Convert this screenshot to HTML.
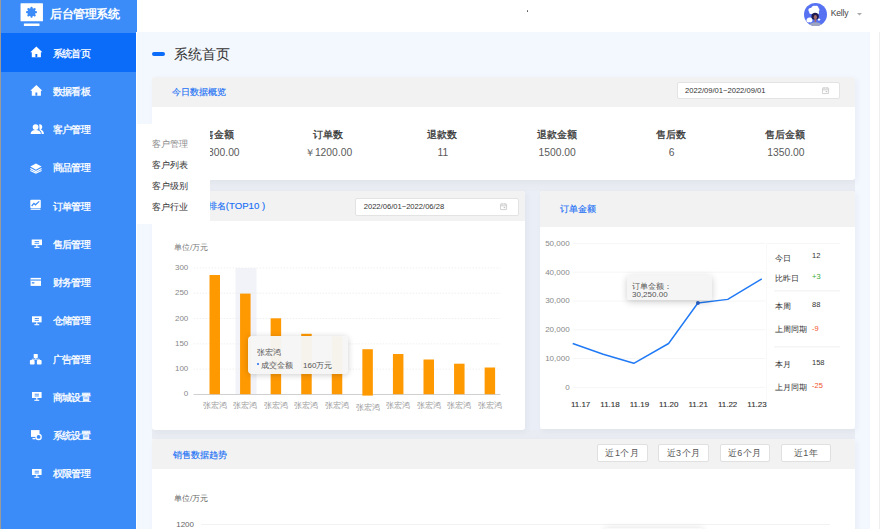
<!DOCTYPE html><html><head><meta charset="utf-8"><style>
*{margin:0;padding:0;box-sizing:border-box}
html,body{width:880px;height:529px;overflow:hidden;background:#fff;font-family:"Liberation Sans",sans-serif;color:#333}
.abs{position:absolute;white-space:nowrap}
#side{position:absolute;left:0;top:0;width:136px;height:529px;background:#3b8cf9;border-left:1px solid #9a9a9a}
#main{position:absolute;left:136px;top:32px;width:734px;height:497px;background:#f3f7fe;border-left:1px solid #fff}
#hdr{position:absolute;left:136px;top:0;width:744px;height:32px;background:#fff}
#gutter{position:absolute;left:870px;top:32px;width:10px;height:497px;background:#fff;border-right:1px solid #eeeeee}
.card{position:absolute;background:#fff;border-radius:3px;overflow:hidden;box-shadow:2px 2px 6px rgba(40,60,100,0.05)}
.ch{position:absolute;left:0;right:0;top:0;background:#f2f2f2}
.ct{position:absolute;font-size:9px;color:#1a70f5;-webkit-text-stroke:0.15px #1a70f5;white-space:nowrap;line-height:10px}
.date{position:absolute;background:#fff;border:1px solid #e3e3e3;border-radius:2px}
.date span{position:absolute;font-size:7.6px;color:#333;line-height:9px;white-space:nowrap}
.st{position:absolute;width:120px;text-align:center;white-space:nowrap;line-height:12px}
.st.b{font-size:10px;color:#333;-webkit-text-stroke:0.28px #333}
.st.v{font-size:10.3px;color:#5a5a5a}
.it{position:absolute;left:52.5px;font-size:10px;letter-spacing:-0.6px;-webkit-text-stroke:0.3px #fff;color:#fff;line-height:12px;white-space:nowrap}
.pm{position:absolute;left:152px;font-size:9px;color:#333;line-height:10px;white-space:nowrap}
.yl{position:absolute;font-size:8px;color:#888;line-height:9px;text-align:right;width:30px;white-space:nowrap}
.xl{position:absolute;font-size:8px;color:#999;line-height:9px;text-align:center;width:30px;white-space:nowrap}
.xl2{position:absolute;font-size:8px;color:#333;line-height:9px;text-align:center;width:30px;white-space:nowrap;-webkit-text-stroke:0.12px #333}
.sl{position:absolute;left:775px;font-size:8px;color:#333;line-height:9px;white-space:nowrap}
.sv{position:absolute;left:812px;font-size:7.5px;color:#333;line-height:9px;white-space:nowrap}
.btn{position:absolute;top:444.2px;width:50.5px;height:18.3px;background:#fff;border:1px solid #e0e0e0;border-radius:2px;font-size:9px;letter-spacing:0.5px;color:#555;text-align:center;line-height:16px}
</style></head><body>
<div id="hdr"></div><div id="main"></div><div id="gutter"></div>
<div class="abs" style="left:152px;top:179px;width:703px;height:12.5px;background:#e9ecf2"></div>
<div class="abs" style="left:152px;top:429px;width:703px;height:10px;background:#e9ecf2"></div>
<div class="abs" style="left:525px;top:191px;width:15px;height:239px;background:#eaeef6"></div>
<div id="side"></div>
<div class="abs" style="left:136px;top:0;width:1px;height:32px;background:#3b8cf9"></div>
<div class="abs" style="left:1px;top:33.3px;width:135px;height:38.3px;background:#0b6cfa"></div>
<svg class="abs" style="left:19px;top:3px" width="25" height="24" viewBox="0 0 25 24">
<rect x="1.55" y="0.2" width="22.4" height="18.1" rx="0.6" fill="#fff"/>
<rect x="4.9" y="20.5" width="15.6" height="2.5" fill="#fff"/>
<g fill="#3b8cf9" transform="translate(12.5 9.2)"><circle r="3.9"/>
<rect x="-1.1" y="-5.5" width="2.2" height="11" rx="1"/><rect x="-1.1" y="-5.5" width="2.2" height="11" rx="1" transform="rotate(45)"/>
<rect x="-1.1" y="-5.5" width="2.2" height="11" rx="1" transform="rotate(90)"/><rect x="-1.1" y="-5.5" width="2.2" height="11" rx="1" transform="rotate(135)"/></g></svg>
<div class="abs" style="left:50px;top:6.7px;letter-spacing:-0.4px;font-size:12px;font-weight:bold;color:#fff;line-height:14px">后台管理系统</div>
<div class="it" style="top:47.50px">系统首页</div>
<div class="it" style="top:85.77px">数据看板</div>
<div class="it" style="top:124.04px">客户管理</div>
<div class="it" style="top:162.31px">商品管理</div>
<div class="it" style="top:200.58px">订单管理</div>
<div class="it" style="top:238.85px">售后管理</div>
<div class="it" style="top:277.12px">财务管理</div>
<div class="it" style="top:315.39px">仓储管理</div>
<div class="it" style="top:353.66px">广告管理</div>
<div class="it" style="top:391.93px">商城设置</div>
<div class="it" style="top:430.20px">系统设置</div>
<div class="it" style="top:468.47px">权限管理</div>
<svg class="abs" style="left:0;top:0" width="136" height="529"><path d="M30.3 52.2 L36.35 46.6 L42.4 52.2 L40.9 52.2 L40.9 57.2 L31.8 57.2 L31.8 52.2 Z" fill="#fff"/><rect x="35.4" y="54.0" width="1.9" height="3.2" fill="#0b6cfa"/><path d="M30.3 90.69999999999999 L36.35 85.1 L42.4 90.69999999999999 L40.9 90.69999999999999 L40.9 95.69999999999999 L31.8 95.69999999999999 L31.8 90.69999999999999 Z" fill="#fff"/><rect x="35.4" y="92.5" width="1.9" height="3.2" fill="#3b8cf9"/><path d="M39.2 124.4 C41.2 124 42.6 125.6 42.2 127.4 C42 128.6 41.2 129.4 40.4 129.6 C42.6 130 43.9 131.5 43.9 133.9 L41.8 133.9 C41.5 131.8 40.8 130.8 39.6 130.2 Z" fill="#fff"/><circle cx="35.6" cy="127.1" r="2.9" fill="#fff"/><path d="M30.6 133.9 C30.7 131 32.5 129.9 35.6 129.9 C38.7 129.9 40.8 131 41 133.9 Z" fill="#fff"/><path d="M30.3 166.6 L35.9 163.5 L41.6 166.6 L35.9 169.7 Z" fill="#fff"/><path d="M30.3 168.6 L35.9 171.6 L41.6 168.6" fill="none" stroke="#fff" stroke-width="1.1"/><path d="M30.3 170.4 L35.9 173.1 L41.6 170.4" fill="none" stroke="#fff" stroke-width="1.1"/><rect x="30.3" y="199.8" width="10.5" height="8.4" rx="1" fill="#fff"/><rect x="30.6" y="208.8" width="9.9" height="1" fill="#fff"/><path d="M31.7 206 L33.9 203.3 L35.5 204.8 L39.2 201.4" fill="none" stroke="#3b8cf9" stroke-width="1.25"/><rect x="31.7" y="239.5" width="10.3" height="5.64" fill="#fff"/><rect x="34.58" y="241.16" width="4.53" height="0.9" fill="#3b8cf9"/><rect x="34.58" y="242.82" width="4.53" height="0.9" fill="#3b8cf9"/><rect x="36.25" y="245.14" width="1.2" height="1.83" fill="#fff"/><rect x="34.27" y="246.80" width="5.15" height="1.1" fill="#fff"/><rect x="30.6" y="277.9" width="10.4" height="8" fill="#fff"/><rect x="30.6" y="279.5" width="10.4" height="1.1" fill="#3b8cf9"/><rect x="31.8" y="282.2" width="2.6" height="1.3" fill="#3b8cf9"/><rect x="32" y="316.3" width="9.6" height="6.05" fill="#fff"/><rect x="34.69" y="318.08" width="4.22" height="0.9" fill="#3b8cf9"/><rect x="34.69" y="319.86" width="4.22" height="0.9" fill="#3b8cf9"/><rect x="36.20" y="322.35" width="1.2" height="1.96" fill="#fff"/><rect x="34.40" y="324.13" width="4.80" height="1.1" fill="#fff"/><rect x="33.7" y="353.9" width="4.1" height="4" rx="0.7" fill="#fff"/><rect x="29.9" y="359.9" width="4.7" height="4.6" rx="0.8" fill="#fff"/><rect x="36.9" y="359.9" width="4.7" height="4.6" rx="0.8" fill="#fff"/><path d="M35.75 357.5 L35.75 359.2 M32.2 360 L32.2 359.2 L39.3 359.2 L39.3 360" fill="none" stroke="#fff" stroke-width="0.8"/><rect x="32" y="392" width="9.6" height="5.98" fill="#fff"/><rect x="34.69" y="393.76" width="4.22" height="0.9" fill="#3b8cf9"/><rect x="34.69" y="395.52" width="4.22" height="0.9" fill="#3b8cf9"/><rect x="36.20" y="397.98" width="1.2" height="1.94" fill="#fff"/><rect x="34.40" y="399.74" width="4.80" height="1.1" fill="#fff"/><rect x="31" y="430.1" width="8.5" height="6.8" fill="#fff"/><rect x="32.5" y="438" width="3" height="1.3" fill="#fff"/><circle cx="38.6" cy="436.9" r="2.6" fill="#3b8cf9" stroke="#fff" stroke-width="1.3"/><rect x="32" y="469" width="9.6" height="5.98" fill="#fff"/><rect x="34.69" y="470.76" width="4.22" height="0.9" fill="#3b8cf9"/><rect x="34.69" y="472.52" width="4.22" height="0.9" fill="#3b8cf9"/><rect x="36.20" y="474.98" width="1.2" height="1.94" fill="#fff"/><rect x="34.40" y="476.74" width="4.80" height="1.1" fill="#fff"/></svg>
<svg class="abs" style="left:803.5px;top:3.1px" width="23" height="23" viewBox="0 0 22.6 22.6">
<defs><clipPath id="cc"><circle cx="11.3" cy="11.3" r="11.3"/></clipPath></defs>
<circle cx="11.3" cy="11.3" r="11.3" fill="#5672f3"/>
<g clip-path="url(#cc)">
<path d="M4.4 7.5 C4 5.5 5.5 4.5 7 5 C7.5 3 9.5 2 11 3 C12.5 2 14.5 3 14.2 5 C15.5 5.8 15.5 7.5 14.5 8.3 C15.3 9.5 14.5 11.3 12.8 11.2 C11.5 12 9.5 11.8 8.5 10.8 C6.5 11.3 4.5 10 5.2 8.5 C4.6 8.2 4.4 7.8 4.4 7.5 Z" fill="#fff"/>
<path d="M2.4 17.5 C2.2 15.5 3.8 14 5.8 14.2 C7.5 14 8.6 15.5 8.3 17 C8.5 18.5 7 19.3 5.5 19 C4 19.5 2.5 18.8 2.4 17.5 Z" fill="#fff"/>
<path d="M13.4 16.2 C13.8 15 15.5 14.8 16 16 C16.3 17 15 17.6 14 17.2 Z" fill="#fff"/>
<path d="M7.3 13 C7.2 10.8 8.8 9.6 10.9 9.6 C13.2 9.6 14.6 11 14.6 13 C14.6 15 13.6 16.2 12.5 16.2 L9.3 16.2 C8 16.2 7.3 14.8 7.3 13 Z" fill="#1f1b4d"/>
<ellipse cx="11.2" cy="13.9" rx="1.6" ry="2.1" fill="#a36a6a"/>
<rect x="10.4" y="15.8" width="1.6" height="3" fill="#a36a6a"/>
<path d="M4.5 23 C5 20 8 18.8 11.3 18.8 C14.5 18.8 17.5 20 18 23 Z" fill="#9ea6bf"/>
</g></svg>
<div class="abs" style="left:830.8px;top:8px;font-size:8.6px;letter-spacing:-0.25px;color:#444;line-height:10px">Kelly</div>
<svg class="abs" style="left:857px;top:13px" width="6" height="3"><path d="M0 0 L5 0 L2.5 2.5 Z" fill="#aaa"/></svg>
<div class="abs" style="left:526.5px;top:10px;width:1.6px;height:1.6px;border-radius:1px;background:#555"></div>
<div class="abs" style="left:152px;top:52px;width:13.3px;height:4px;border-radius:2px;background:#0b6cfa"></div>
<div class="abs" style="left:173.5px;top:45.7px;font-size:14px;letter-spacing:0.3px;color:#333;line-height:17px">系统首页</div>
<div class="card" style="left:152px;top:77px;width:703px;height:102.5px"><div class="ch" style="height:29.5px"></div></div>
<div class="ct" style="left:171.7px;top:87px">今日数据概览</div>
<div class="date" style="left:676.5px;top:81.5px;width:163.7px;height:17.5px"><span style="left:7.5px;top:3.6px">2022/09/01~2022/09/01</span></div>
<svg class="abs" style="left:821.8px;top:87.2px" width="8" height="8" viewBox="0 0 8 8"><rect x="0.4" y="1" width="6.2" height="5.6" rx="0.5" fill="none" stroke="#c4c4c4" stroke-width="0.8"/><path d="M0.4 2.8 H6.6 M2 0.2 V1.6 M5 0.2 V1.6" stroke="#c4c4c4" stroke-width="0.8"/><rect x="3.7" y="4" width="1.5" height="1.2" fill="#c4c4c4"/></svg>
<div class="st b" style="left:153.70px;top:129px">销售金额</div>
<div class="st v" style="left:119.6px;top:147.3px;text-align:right">￥1300.00</div>
<div class="st b" style="left:268.03px;top:129px">订单数</div>
<div class="st v" style="left:268.53px;top:147.3px">￥1200.00</div>
<div class="st b" style="left:382.36px;top:129px">退款数</div>
<div class="st v" style="left:382.86px;top:147.3px">11</div>
<div class="st b" style="left:496.69px;top:129px">退款金额</div>
<div class="st v" style="left:497.19px;top:147.3px">1500.00</div>
<div class="st b" style="left:611.02px;top:129px">售后数</div>
<div class="st v" style="left:611.52px;top:147.3px">6</div>
<div class="st b" style="left:725.35px;top:129px">售后金额</div>
<div class="st v" style="left:725.85px;top:147.3px">1350.00</div>
<div class="card" style="left:152px;top:191px;width:373px;height:238.5px"><div class="ch" style="height:29.5px"></div></div>
<div class="ct" style="left:171.8px;top:201.2px">商品销售排名<span style="font-size:9.6px">(TOP10 )</span></div>
<div class="date" style="left:355.3px;top:198px;width:163.5px;height:17.5px"><span style="left:7.4px;top:3.3px">2022/06/01~2022/06/28</span></div>
<svg class="abs" style="left:500px;top:202.8px" width="8" height="8" viewBox="0 0 8 8"><rect x="0.4" y="1" width="6.2" height="5.6" rx="0.5" fill="none" stroke="#c4c4c4" stroke-width="0.8"/><path d="M0.4 2.8 H6.6 M2 0.2 V1.6 M5 0.2 V1.6" stroke="#c4c4c4" stroke-width="0.8"/><rect x="3.7" y="4" width="1.5" height="1.2" fill="#c4c4c4"/></svg>
<div class="abs" style="left:174px;top:243.3px;font-size:8px;color:#777;line-height:9px">单位/万元</div>
<svg class="abs" style="left:0;top:0" width="880" height="529"><rect x="235.5" y="268" width="21" height="126.2" fill="#f1f3f8"/><line x1="193.6" y1="267.9" x2="500.4" y2="267.9" stroke="#ececec" stroke-width="0.8" stroke-dasharray="1.5 1.5"/><line x1="193.6" y1="293.2" x2="500.4" y2="293.2" stroke="#ececec" stroke-width="0.8" stroke-dasharray="1.5 1.5"/><line x1="193.6" y1="318.5" x2="500.4" y2="318.5" stroke="#ececec" stroke-width="0.8" stroke-dasharray="1.5 1.5"/><line x1="193.6" y1="343.8" x2="500.4" y2="343.8" stroke="#ececec" stroke-width="0.8" stroke-dasharray="1.5 1.5"/><line x1="193.6" y1="369.1" x2="500.4" y2="369.1" stroke="#ececec" stroke-width="0.8" stroke-dasharray="1.5 1.5"/><line x1="193.6" y1="394.5" x2="500.4" y2="394.5" stroke="#d0d0d0" stroke-width="1"/><rect x="209.50" y="275" width="10.5" height="119.20" fill="#ff9902"/><rect x="240.07" y="293.6" width="10.5" height="100.60" fill="#ff9902"/><rect x="270.64" y="318.3" width="10.5" height="75.90" fill="#ff9902"/><rect x="301.21" y="333.8" width="10.5" height="60.40" fill="#ff9902"/><rect x="331.78" y="336.5" width="10.5" height="57.70" fill="#ff9902"/><rect x="362.35" y="349.2" width="10.5" height="46.40" fill="#ff9902"/><rect x="392.92" y="354" width="10.5" height="40.20" fill="#ff9902"/><rect x="423.49" y="359.5" width="10.5" height="34.70" fill="#ff9902"/><rect x="454.06" y="363.7" width="10.5" height="30.50" fill="#ff9902"/><rect x="484.63" y="367.5" width="10.5" height="26.70" fill="#ff9902"/></svg>
<div class="yl" style="left:158.3px;top:262.90px">300</div>
<div class="yl" style="left:158.3px;top:288.20px">250</div>
<div class="yl" style="left:158.3px;top:313.50px">200</div>
<div class="yl" style="left:158.3px;top:338.80px">150</div>
<div class="yl" style="left:158.3px;top:364.10px">100</div>
<div class="yl" style="left:158.3px;top:389.20px">0</div>
<div class="xl" style="left:199.70px;top:401px">张宏鸿</div>
<div class="xl" style="left:230.27px;top:401px">张宏鸿</div>
<div class="xl" style="left:260.84px;top:401px">张宏鸿</div>
<div class="xl" style="left:291.41px;top:401px">张宏鸿</div>
<div class="xl" style="left:321.98px;top:401px">张宏鸿</div>
<div class="xl" style="left:352.55px;top:402.5px">张宏鸿</div>
<div class="xl" style="left:383.12px;top:401px">张宏鸿</div>
<div class="xl" style="left:413.69px;top:401px">张宏鸿</div>
<div class="xl" style="left:444.26px;top:401px">张宏鸿</div>
<div class="xl" style="left:474.83px;top:401px">张宏鸿</div>
<div class="abs" style="left:248.3px;top:336.3px;width:99.7px;height:38.1px;background:rgba(246,246,246,0.96);border-radius:4px;box-shadow:0 1px 6px rgba(0,0,0,0.2)"></div>
<div class="abs" style="left:256.5px;top:348px;font-size:8px;color:#555;line-height:9px">张宏鸿</div>
<div class="abs" style="left:257px;top:362.7px;width:2.2px;height:2.2px;border-radius:50%;background:#1f6cf0"></div>
<div class="abs" style="left:261px;top:361px;font-size:8px;color:#555;line-height:9px">成交金额</div>
<div class="abs" style="left:303px;top:361px;font-size:8px;color:#555;line-height:9px">160万元</div>
<div class="card" style="left:540px;top:191.2px;width:314.5px;height:238.3px"><div class="ch" style="height:35.4px"></div></div>
<div class="ct" style="left:560px;top:203.8px">订单金额</div>
<svg class="abs" style="left:0;top:0" width="880" height="529"><line x1="572.7" y1="243.4" x2="765.4" y2="243.4" stroke="#f6f6f6" stroke-width="1"/><line x1="572.7" y1="272.2" x2="765.4" y2="272.2" stroke="#f6f6f6" stroke-width="1"/><line x1="572.7" y1="301.0" x2="765.4" y2="301.0" stroke="#f6f6f6" stroke-width="1"/><line x1="572.7" y1="329.8" x2="765.4" y2="329.8" stroke="#f6f6f6" stroke-width="1"/><line x1="572.7" y1="358.6" x2="765.4" y2="358.6" stroke="#f6f6f6" stroke-width="1"/><line x1="572.7" y1="387.4" x2="765.4" y2="387.4" stroke="#f6f6f6" stroke-width="1"/><line x1="766.5" y1="243.5" x2="766.5" y2="403" stroke="#f9f9f9" stroke-width="1"/><line x1="774" y1="290.9" x2="840" y2="290.9" stroke="#efefef" stroke-width="1"/><line x1="774" y1="346.9" x2="840" y2="346.9" stroke="#efefef" stroke-width="1"/><line x1="767" y1="243.5" x2="840" y2="243.5" stroke="#f6f6f6" stroke-width="1"/><polyline points="572.7,343.5 603.2,354.3 633.8,363.3 668.6,343.5 697.9,303 727.7,299.4 761.8,278.9" fill="none" stroke="#2079f5" stroke-width="1.45" stroke-linejoin="round"/><circle cx="697.9" cy="303" r="1.9" fill="#2a62c9"/></svg>
<div class="yl" style="left:539.6px;top:238.70px;color:#888">50,000</div>
<div class="yl" style="left:539.6px;top:267.50px;color:#888">40,000</div>
<div class="yl" style="left:539.6px;top:296.30px;color:#888">30,000</div>
<div class="yl" style="left:539.6px;top:325.10px;color:#888">20,000</div>
<div class="yl" style="left:539.6px;top:353.90px;color:#888">10,000</div>
<div class="yl" style="left:539.6px;top:382.70px;color:#888">0</div>
<div class="xl2" style="left:565.60px;top:399.5px">11.17</div>
<div class="xl2" style="left:595.00px;top:399.5px">11.18</div>
<div class="xl2" style="left:624.40px;top:399.5px">11.19</div>
<div class="xl2" style="left:653.80px;top:399.5px">11.20</div>
<div class="xl2" style="left:683.20px;top:399.5px">11.21</div>
<div class="xl2" style="left:712.60px;top:399.5px">11.22</div>
<div class="xl2" style="left:742.00px;top:399.5px">11.23</div>
<div class="abs" style="left:626.6px;top:274.6px;width:85.1px;height:25.1px;background:rgba(245,245,245,0.96);border-radius:3px;box-shadow:0 2px 7px rgba(0,0,0,0.2)"></div>
<div class="abs" style="left:632px;top:282.3px;font-size:8px;color:#555;line-height:9px">订单金额：</div><div class="abs" style="left:632px;top:289.7px;font-size:8px;color:#555;line-height:9px">30,250.00</div>
<div class="sl" style="top:253.60px">今日</div>
<div class="sl" style="top:273.70px">比昨日</div>
<div class="sl" style="top:301.70px">本周</div>
<div class="sl" style="top:325.40px">上周同期</div>
<div class="sl" style="top:359.90px">本月</div>
<div class="sl" style="top:382.90px">上月同期</div>
<div class="sv" style="top:251.00px;color:#333">12</div>
<div class="sv" style="top:271.90px;color:#3aaa35">+3</div>
<div class="sv" style="top:299.50px;color:#333">88</div>
<div class="sv" style="top:323.50px;color:#f0522a">-9</div>
<div class="sv" style="top:358.10px;color:#333">158</div>
<div class="sv" style="top:381.10px;color:#f0522a">-25</div>
<div class="card" style="left:152px;top:438.5px;width:703px;height:100px"><div class="ch" style="height:30.5px"></div></div>
<div class="ct" style="left:173px;top:450.2px">销售数据趋势</div>
<div class="btn" style="left:597.20px">近1个月</div>
<div class="btn" style="left:658.35px">近3个月</div>
<div class="btn" style="left:719.50px">近6个月</div>
<div class="btn" style="left:780.65px">近1年</div>
<div class="abs" style="left:174px;top:494.3px;font-size:8px;color:#666;line-height:9px">单位/万元</div>
<div class="abs" style="left:176.2px;top:519.5px;font-size:8px;color:#666;line-height:9px">1200</div>
<div class="abs" style="left:201px;top:524px;width:629px;height:1px;background:#f2f2f2"></div>
<div class="abs" style="left:604px;top:527.5px;width:100px;height:20px;background:rgba(250,250,250,0.95);border-radius:4px;box-shadow:0 0 6px rgba(0,0,0,0.12)"></div>
<div class="abs" style="left:136px;top:124px;width:74px;height:100px;background:#fff"></div>
<div class="pm" style="top:138.50px;color:#8a8a8a">客户管理</div>
<div class="pm" style="top:160.40px;color:#333">客户列表</div>
<div class="pm" style="top:181.30px;color:#333">客户级别</div>
<div class="pm" style="top:202.10px;color:#333">客户行业</div>
</body></html>
